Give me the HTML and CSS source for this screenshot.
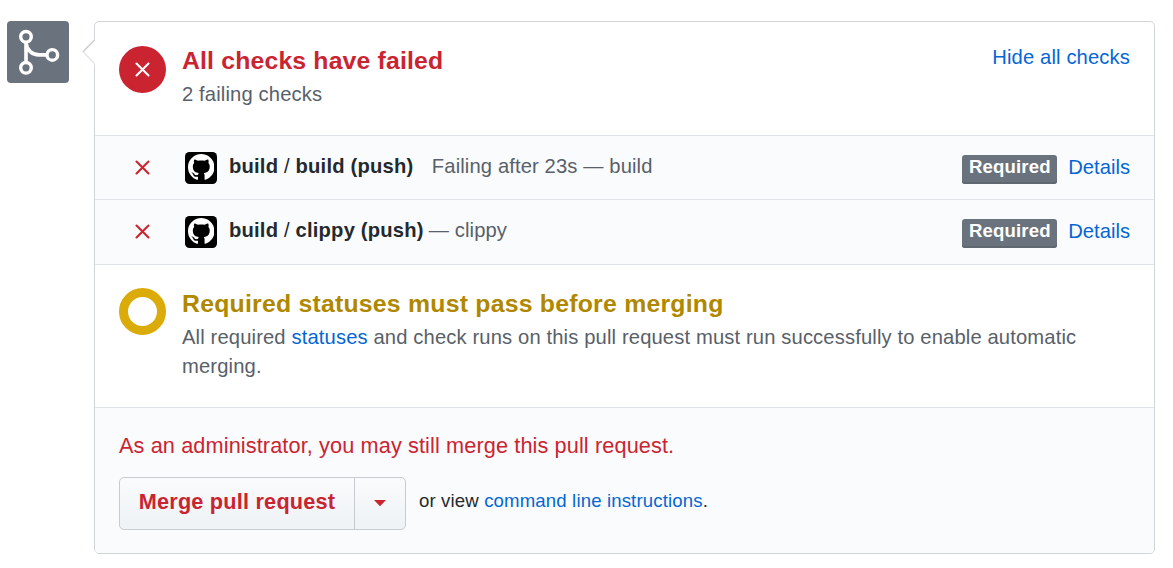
FILE: index.html
```html
<!DOCTYPE html>
<html lang="en">
<head>
<meta charset="utf-8">
<title>Merge status</title>
<link rel="stylesheet" href="styles.css">
</head>
<body>
<svg class="sprite" aria-hidden="true">
  <symbol id="cross" viewBox="0 0 15 15"><path d="M1.500 1.500 13.500 13.500M13.500 1.500 1.500 13.500" fill="none" stroke="currentColor" stroke-width="2.100" stroke-linecap="round"/></symbol>
  <symbol id="mark" viewBox="0 0 16 16"><path fill="currentColor" d="M8 0C3.58 0 0 3.58 0 8c0 3.54 2.29 6.53 5.47 7.59.4.07.55-.17.55-.38 0-.19-.01-.82-.01-1.49-2.01.37-2.53-.49-2.69-.94-.09-.23-.48-.94-.82-1.13-.28-.15-.68-.52-.01-.53.63-.01 1.08.58 1.23.82.72 1.21 1.87.87 2.33.66.07-.52.28-.87.51-1.07-1.78-.2-3.64-.89-3.64-3.95 0-.87.31-1.59.82-2.15-.08-.2-.36-1.02.08-2.12 0 0 .67-.21 2.2.82.64-.18 1.32-.27 2-.27s1.36.09 2 .27c1.53-1.04 2.2-.82 2.2-.82.44 1.1.16 1.92.08 2.12.51.56.82 1.27.82 2.15 0 3.07-1.87 3.75-3.65 3.95.29.25.54.73.54 1.48 0 1.07-.01 1.93-.01 2.2 0 .21.15.46.55.38A8.01 8.01 0 0 0 16 8c0-4.42-3.58-8-8-8z"/></symbol>
</svg>
<main class="merge">
  <div class="badge">
    <svg class="badge-icon" viewBox="0 0 62 62" fill="none" stroke="currentColor">
      <circle cx="19" cy="15.8" r="5.3" stroke-width="3.4"/>
      <circle cx="19" cy="46.8" r="5.3" stroke-width="3.4"/>
      <circle cx="45.3" cy="33.9" r="5.3" stroke-width="3.4"/>
      <path d="M19 21.5V41M19 22c1 7 6 11.900 13 11.900H39.500" stroke-width="3.6"/>
    </svg>
  </div>
  <section class="panel">
    <svg class="pointer" viewBox="0 0 13 26"><path d="M12.500 0V1.500L1 13 12.500 24.500V26H13V0z" fill="#fff"/><path d="M12.500 1 1 12.800" fill="none" stroke="#cacdd2" stroke-width="1.500"/><path d="M1 12.800 12.500 24.500" fill="none" stroke="#e1e4e8" stroke-width="1.300"/></svg>
    <header class="summary">
      <span class="status status-failed"><svg class="cross"><use href="#cross"/></svg></span>
      <div class="copy">
        <h1 class="title title-failed">All checks have failed</h1>
        <p class="note">2 failing checks</p>
      </div>
      <a class="link toggle">Hide all checks</a>
    </header>
    <div class="check">
      <svg class="cross check-cross"><use href="#cross"/></svg>
      <span class="avatar"><svg class="mark"><use href="#mark"/></svg></span>
      <p class="name"><strong class="job">build</strong> / <strong class="job">build (push)</strong></p>
      <p class="detail detail-build">Failing after 23s — build</p>
      <span class="required">Required</span>
      <a class="link more">Details</a>
    </div>
    <div class="check check-last">
      <svg class="cross check-cross"><use href="#cross"/></svg>
      <span class="avatar"><svg class="mark"><use href="#mark"/></svg></span>
      <p class="name"><strong class="job">build</strong> / <strong class="job">clippy (push)</strong></p>
      <p class="detail detail-clippy">— clippy</p>
      <span class="required">Required</span>
      <a class="link more">Details</a>
    </div>
    <section class="rules">
      <span class="status status-pending"></span>
      <div class="copy copy-pending">
        <h2 class="title title-pending">Required statuses must pass before merging</h2>
        <p class="note">All required <a class="link">statuses</a> and check runs on this pull request must run successfully to enable automatic<br>merging.</p>
      </div>
    </section>
    <footer class="actions">
      <p class="admin">As an administrator, you may still merge this pull request.</p>
      <div class="controls">
        <div class="group">
          <button class="button button-merge">Merge pull request</button>
          <button class="button button-menu" aria-label="Select merge method"><svg class="caret" viewBox="0 0 12 7"><path d="M0 0H12L6 6.300z" fill="currentColor"/></svg></button>
        </div>
        <p class="view">or view <a class="link">command line instructions</a>.</p>
      </div>
    </footer>
  </section>
</main>
</body>
</html>
```
FILE: styles.css
```css
* { box-sizing: border-box; }
body {
  margin: 0;
  background: #fff;
  color: #24292e;
  font-family: "Liberation Sans", Arial, sans-serif;
  font-size: 20.2px;
}
h1, h2, p { margin: 0; white-space: nowrap; }
.sprite { display: none; }
.merge { display: flex; align-items: flex-start; gap: 25px; padding: 21px 18px 14px 7px; }
.badge { flex: none; width: 62px; height: 62px; border-radius: 4px; background: #6a737d; color: #fff; }
.badge-icon { display: block; width: 62px; height: 62px; }
.panel { position: relative; flex: 1; height: 533px; border: 1px solid #d1d5da; border-radius: 5px; }
.pointer { position: absolute; left: -13px; top: 17px; width: 13px; height: 26px; }
.summary { display: flex; height: 113px; padding: 24px 24px 0; }
.status { flex: none; display: flex; align-items: center; justify-content: center; width: 47px; height: 47px; border-radius: 50%; }
.status-failed { background: #cb2431; color: #fff; }
.status-pending { border: 9.300px solid #dbab09; }
.cross { flex: none; width: 15px; height: 15px; }
.copy { flex: 1; margin-left: 16px; }
.copy-pending { padding-top: 1px; }
.title { font-size: 24.8px; line-height: 30px; font-weight: 700; }
.title-failed { color: #cb2431; letter-spacing: 0.16px; }
.title-pending { color: #b08800; letter-spacing: 0.23px; }
.note { margin-top: 4px; line-height: 29px; color: #586069; letter-spacing: 0.135px; }
.link { color: #0366d6; }
.toggle { margin-top: -1px; line-height: 24px; letter-spacing: 0.13px; }
.check { display: flex; align-items: center; height: 64px; padding: 0 24px 0 40px; border-top: 1px solid #e1e4e8; background: #fafbfc; }
.check-last { height: 65px; padding-bottom: 1px; }
.check-cross { color: #cb2431; }
.avatar { display: flex; align-items: center; justify-content: center; width: 32px; height: 32px; margin-left: 35px; border-radius: 4.5px; background: #000; color: #fff; }
.mark { width: 26.5px; height: 26.5px; }
.name { margin: 0 0 3px 12px; letter-spacing: 0.19px; }
.job { font-weight: 700; }
.detail { margin-bottom: 3px; color: #586069; letter-spacing: 0.12px; }
.detail-build { margin-left: 18.5px; }
.detail-clippy { margin-left: 5px; }
.required { width: 95px; height: 29px; margin: 3px 11px 0 auto; border-radius: 3px; background: #6a737d; box-shadow: inset 0 -2px 0 #5f6871; color: #fff; font-size: 18.6px; font-weight: 700; line-height: 24px; letter-spacing: 0.15px; text-align: center; }
.rules { display: flex; height: 143px; padding: 23px 24px 0; border-top: 1px solid #e1e4e8; }
.actions { height: 146px; padding: 23px 24px 0; border-top: 1px solid #e1e4e8; border-radius: 0 0 4px 4px; background: #fafbfc; }
.admin { line-height: 30px; font-size: 21.700px; color: #cb2431; letter-spacing: 0.115px; }
.controls { display: flex; align-items: center; margin-top: 16px; }
.group { display: flex; width: 287px; height: 53px; border: 1px solid #c8cbcf; border-radius: 5px; background: linear-gradient(#fafbfc, #eff3f6 90%); }
.button { display: flex; align-items: center; justify-content: center; padding: 0; border: 0; background: none; color: #cb2431; font: 700 21.700px "Liberation Sans", Arial, sans-serif; }
.button-merge { width: 234px; padding-bottom: 4px; letter-spacing: 0.21px; }
.button-menu { flex: 1; border-left: 1px solid #c8cbcf; }
.caret { width: 12px; height: 7px; }
.view { margin: 0 0 6px 13px; font-size: 18.6px; letter-spacing: 0.14px; }
```
